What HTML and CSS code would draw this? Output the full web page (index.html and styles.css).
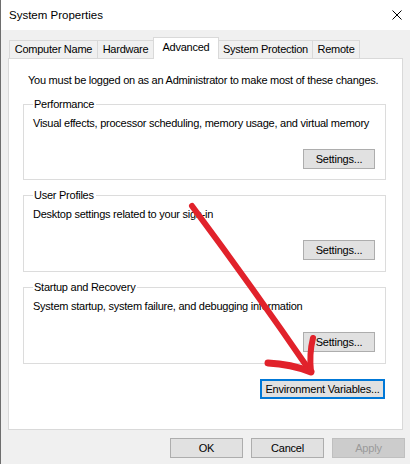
FILE: index.html
```html
<!DOCTYPE html>
<html lang="en">
<head>
    <meta charset="UTF-8">
    <title>System Properties</title>
    <link rel="stylesheet" href="styles.css">
</head>
<body>
    <div class="window">
        <div class="titlebar">
            <span class="title">System Properties</span>
            <svg class="close" width="10" height="10" viewBox="0 0 10 10">
                <path d="M0.5 0.5 L9.5 9.5 M9.5 0.5 L0.5 9.5" stroke="#000" stroke-width="1"/>
            </svg>
        </div>

        <div class="client">
            <div class="tabs">
                <div class="tab tab-computer">Computer Name</div>
                <div class="tab tab-hardware">Hardware</div>
                <div class="tab tab-advanced selected">Advanced</div>
                <div class="tab tab-protection">System Protection</div>
                <div class="tab tab-remote">Remote</div>
            </div>

            <div class="panel">
                <p class="notice">You must be logged on as an Administrator to make most of these changes.</p>

                <fieldset class="group group-perf">
                    <legend>Performance</legend>
                    <p class="desc">Visual effects, processor scheduling, memory usage, and virtual memory</p>
                    <div class="group-actions"><button type="button" class="btn">Settings...</button></div>
                </fieldset>

                <fieldset class="group">
                    <legend>User Profiles</legend>
                    <p class="desc">Desktop settings related to your sign-in</p>
                    <div class="group-actions"><button type="button" class="btn">Settings...</button></div>
                </fieldset>

                <fieldset class="group">
                    <legend>Startup and Recovery</legend>
                    <p class="desc">System startup, system failure, and debugging information</p>
                    <div class="group-actions"><button type="button" class="btn">Settings...</button></div>
                </fieldset>

                <div class="env-row">
                    <button type="button" class="btn btn-env">Environment Variables...</button>
                </div>
            </div>

            <div class="footer">
                <button type="button" class="btn btn-footer">OK</button>
                <button type="button" class="btn btn-footer">Cancel</button>
                <button type="button" class="btn btn-footer" disabled>Apply</button>
            </div>
        </div>

        <!-- hand drawn annotation on top of the dialog -->
        <svg class="annotation" width="410" height="464" viewBox="0 0 410 464">
            <g fill="none" stroke="#e1222b" stroke-linecap="round" stroke-linejoin="round">
                <path d="M191 206 Q 252 288 309 371" stroke-width="6"/>
                <path d="M267 363 Q 290 364 310 372" stroke-width="7"/>
                <path d="M310 372 Q 308 354 312 338" stroke-width="6"/>
            </g>
        </svg>
    </div>
</body>
</html>
```

FILE: styles.css
```css
body { margin: 0; font-family: "Liberation Sans", Arial, sans-serif; font-size: 11px; letter-spacing: -0.25px; color: #000; }
.window { position: relative; width: 410px; height: 464px; background-color: #f0f0f0; border-left: 1px solid #6e6e6e; box-sizing: border-box; overflow: hidden; }

.titlebar { height: 30px; background-color: #fff; display: flex; align-items: center; justify-content: space-between; padding: 0 8px 1px 8px; box-sizing: border-box; }
.title { font-size: 11.5px; letter-spacing: 0; }

.client { padding: 7px 0 0 7px; }

.tabs { display: flex; align-items: flex-end; height: 21px; padding-left: 1px; }
.tab { height: 18px; line-height: 17px; text-align: center; border: 1px solid #d9d9d9; border-bottom: none; background-color: #f0f0f0; box-sizing: border-box; margin-left: -1px; white-space: nowrap; }
.tab:first-child { margin-left: 0; }
.tab.selected { height: 22px; line-height: 18px; background-color: #fff; position: relative; z-index: 1; margin-bottom: -1px; }
.tab-computer { width: 89px; }
.tab-hardware { width: 57px; }
.tab-advanced { width: 66px; }
.tab-protection { width: 95px; }
.tab-remote { width: 48px; }

.panel { width: 395px; height: 372px; background-color: #fff; border: 1px solid #d9d9d9; box-sizing: border-box; padding: 14px 16px 0 14px; }
.notice { margin: 0 0 0 5px; line-height: 14px; white-space: nowrap; }

.group { margin: 10px 0 0 0; padding: 5px 10px 11px 9px; border: 1px solid #dcdcdc; min-width: 0; }
.group + .group { margin-top: 8px; }
.group-perf { padding-bottom: 10px; }
.group legend { padding: 0 2px 0 1px; margin-left: 0; line-height: 14px; }
.desc { margin: 0; line-height: 14px; white-space: nowrap; }
.group-actions { display: flex; justify-content: flex-end; margin-top: 19px; }

.btn { font-family: inherit; font-size: 11px; letter-spacing: -0.2px; color: #000; background-color: #e1e1e1; border: 1px solid #adadad; height: 20px; padding: 0; box-sizing: border-box; white-space: nowrap; }
.group .btn { width: 72px; }
.env-row { display: flex; justify-content: flex-end; margin-top: 15px; margin-right: 1px; }
.btn-env { width: 125px; border-color: #0078d7; box-shadow: inset 0 0 0 1px #0078d7; }

.footer { display: flex; justify-content: flex-end; gap: 8px; margin-top: 8px; padding-right: 5px; }
.btn-footer { width: 73px; }
.btn-footer:disabled { background-color: #cccccc; border-color: #bfbfbf; color: #9a9a9a; }

.annotation { position: absolute; left: 0; top: 0; pointer-events: none; }
```
